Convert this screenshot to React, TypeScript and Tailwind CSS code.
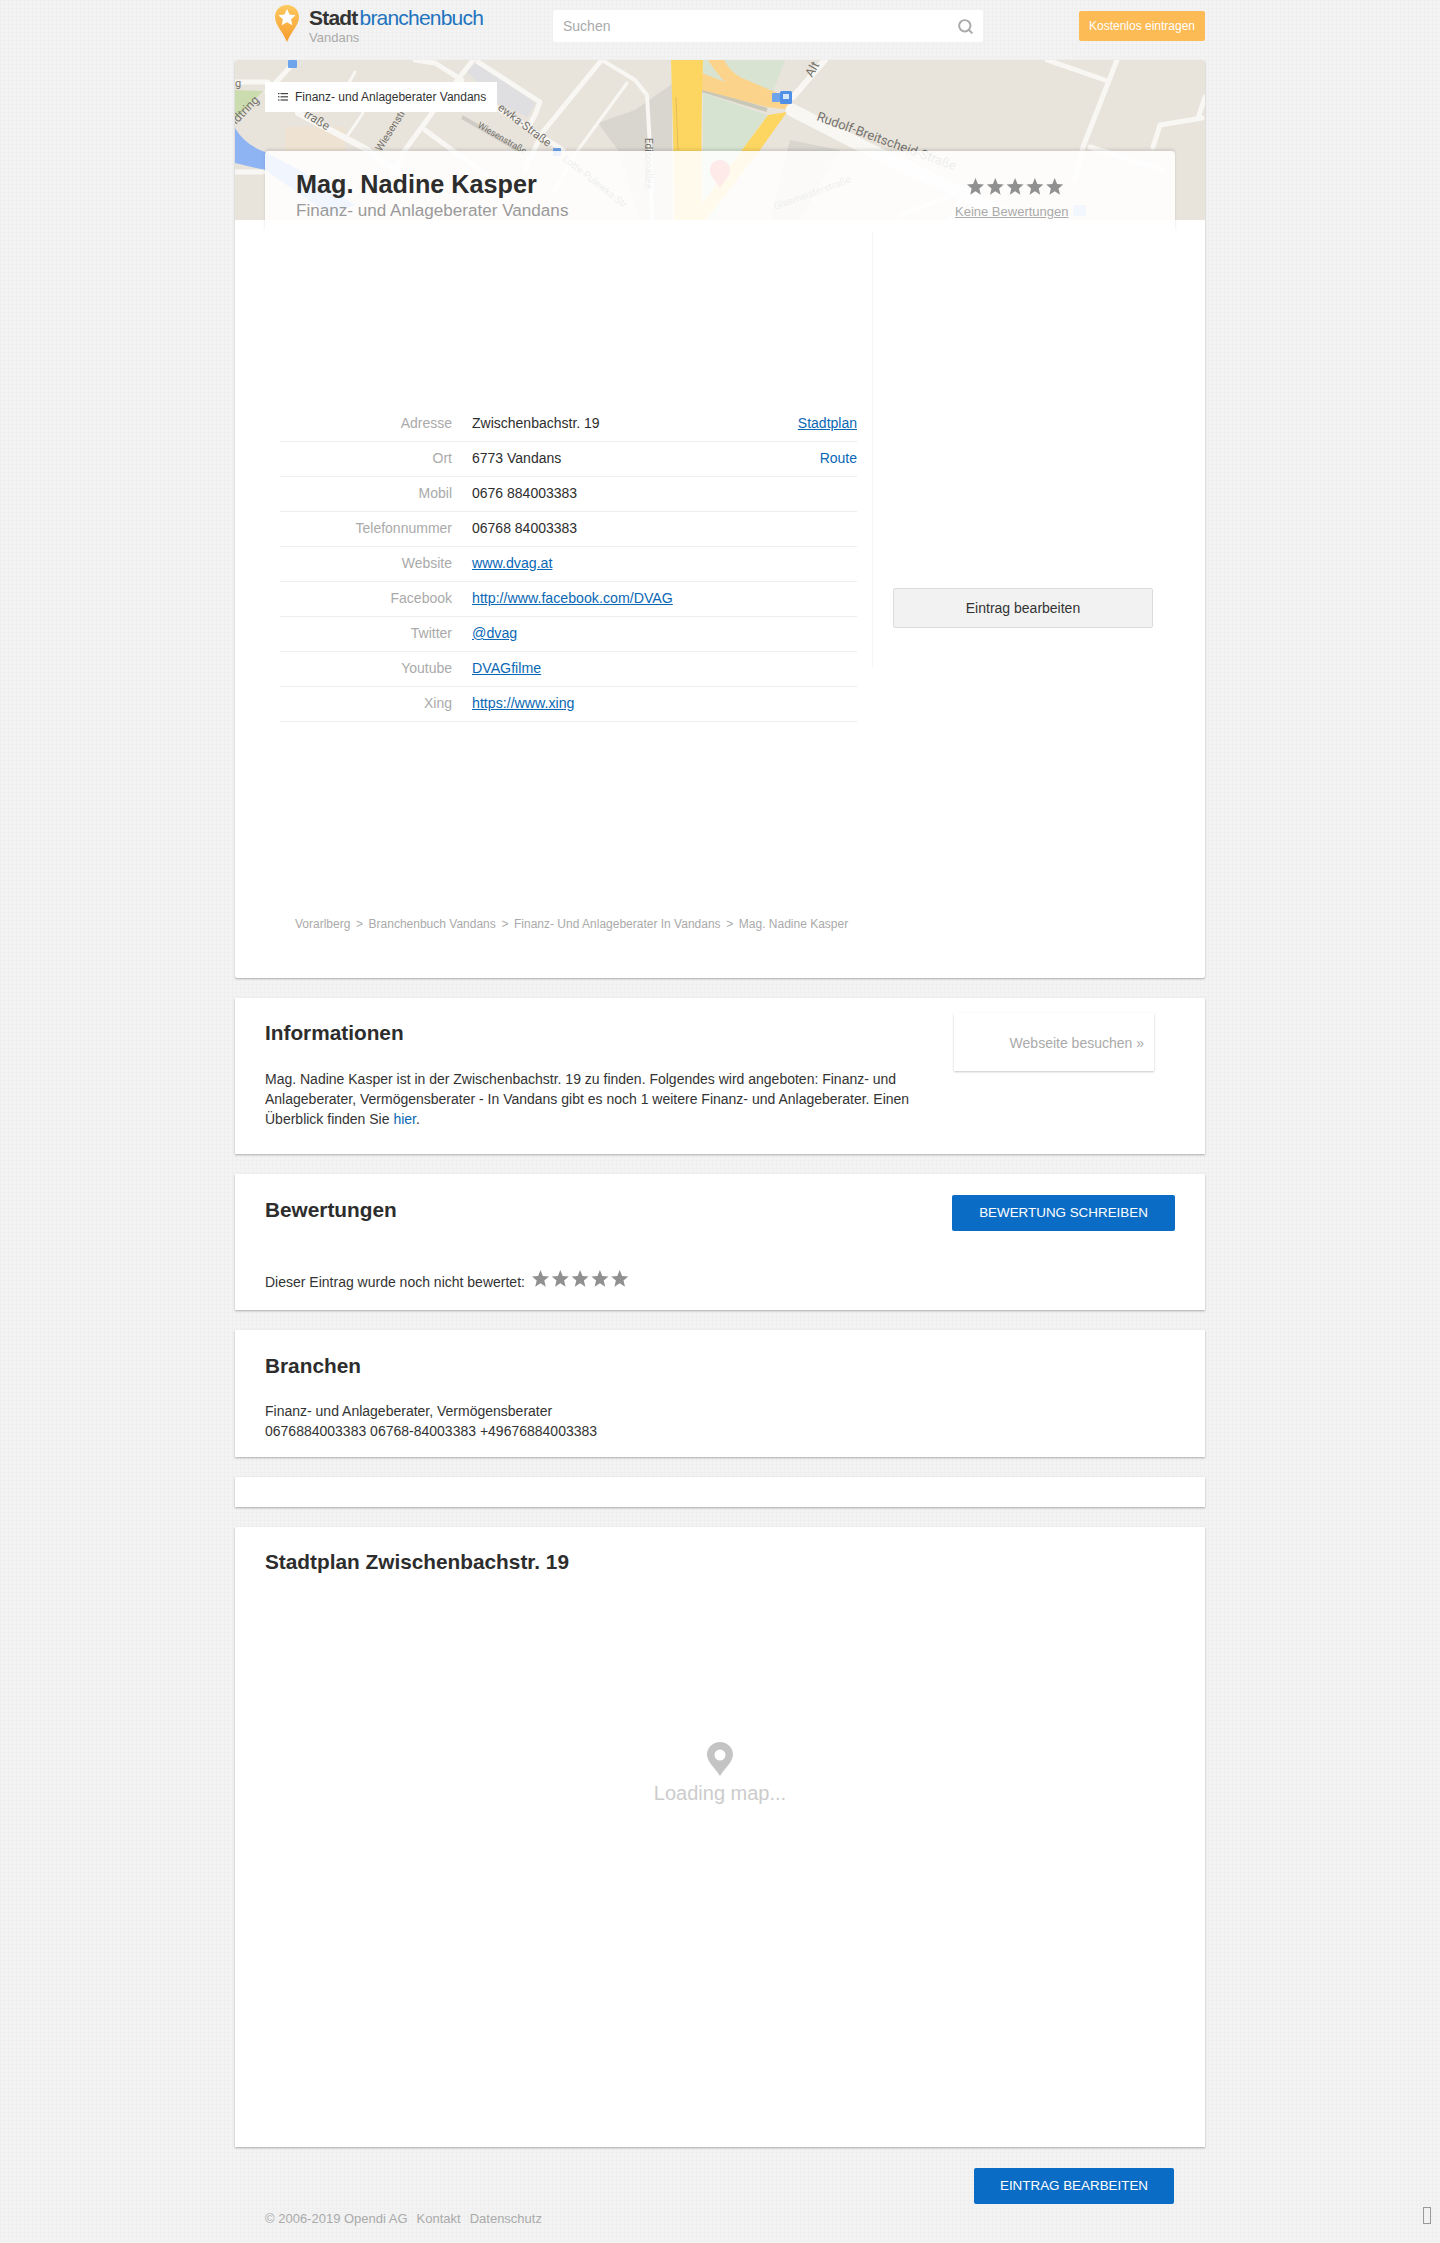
import { Search } from 'lucide-react'

const rows = [
  { label: 'Adresse', value: 'Zwischenbachstr. 19', right: 'Stadtplan', rightUnderline: true },
  { label: 'Ort', value: '6773 Vandans', right: 'Route' },
  { label: 'Mobil', value: '0676 884003383' },
  { label: 'Telefonnummer', value: '06768 84003383' },
  { label: 'Website', value: 'www.dvag.at', link: true },
  { label: 'Facebook', value: 'http://www.facebook.com/DVAG', link: true },
  { label: 'Twitter', value: '@dvag', link: true },
  { label: 'Youtube', value: 'DVAGfilme', link: true },
  { label: 'Xing', value: 'https://www.xing', link: true },
]

function Stars({ className }: { className?: string }) {
  return (
    <svg viewBox="0 0 97 18" className={className} fill="#909090">
      {[0, 1, 2, 3, 4].map((i) => (
        <polygon
          key={i}
          transform={`translate(${i * 19.8} 0)`}
          points="8.5,0 10.9,5.9 17,6.4 12.3,10.4 13.8,16.7 8.5,13.3 3.2,16.7 4.7,10.4 0,6.4 6.1,5.9"
        />
      ))}
    </svg>
  )
}

function MapBackground() {
  const road = { fill: 'none', stroke: '#f8f7f3', strokeLinecap: 'round' as const, strokeLinejoin: 'round' as const }
  const label = { fontFamily: 'Roboto, sans-serif', fill: '#75726c' }
  return (
    <svg viewBox="235 60 970 160" className="absolute inset-0 w-full h-full" preserveAspectRatio="none">
      <rect x="235" y="60" width="970" height="160" fill="#e8e4dc" />
      {/* areas */}
      <path d="M285 127 L345 127 L345 165 L285 165 Z" fill="#eee2d2" />
      <path d="M465 70 L478 63 L535 103 L528 117 L498 103 Z" fill="#dfdfe2" />
      <path d="M598 123 L635 110 L672 84 L672 220 L640 220 L618 150 Z" fill="#d9d5cf" />
      <path d="M840 150 L800 220 L770 220 L790 140 Z" fill="#d9d5cf" />
      <path d="M235 90 L263 91 L250 105 L235 120 Z" fill="#cbdcae" />
      <path d="M235 128 Q245 145 265 152 L300 170 L355 205 L330 215 L265 170 L235 163 Z" fill="#8fb4f4" />
      <path d="M703 60 L785 60 L773 92 L703 92 Z" fill="#d8e3d2" />
      <path d="M703 93 L767 115 L742 150 L715 220 L703 220 Z" fill="#d6e3d0" />
      <path d="M702 90 L767 110" stroke="#c9c8b8" strokeWidth="4" fill="none" />
      {/* highways */}
      <path d="M702 73 L725 82 Q714 70 708 60 L724 60 Q730 72 742 78 L775 92 L792 98 L790 110 L767 107 L702 90 Z" fill="#fbd38a" />
      <path d="M671 60 L703 60 Q700 140 703 220 L674 220 Q674 140 671 60 Z" fill="#fdd661" />
      <path d="M768 115 L787 112 L760 150 L706 220 L690 220 L742 150 Z" fill="#fdd661" />
      <path d="M676 97 L678 150" stroke="#e5bd58" strokeWidth="1" fill="none" />
      {/* streets */}
      <path d="M792 110 L870 150 L1010 216" {...road} strokeWidth="13" />
      <path d="M793 97 L825 60" {...road} strokeWidth="6" />
      <path d="M1047 60 L1105 80" {...road} strokeWidth="5" />
      <path d="M1117 60 L1083 147 L1075 180" {...road} strokeWidth="5" />
      <path d="M1153 147 L1160 125 L1202 118 M1205 97 L1198 118" {...road} strokeWidth="5" />
      <path d="M1090 147 L1163 170" {...road} strokeWidth="5" />
      <path d="M235 82 L268 82 M267 92 L292 65" {...road} strokeWidth="5" />
      <path d="M355 72 L342 95 M363 113 L348 135" {...road} strokeWidth="3" />
      <path d="M415 60 L435 63 L462 80 M497 108 L563 150" {...road} strokeWidth="5" />
      <path d="M478 62 L540 102 L535 115 L528 128" {...road} strokeWidth="5" />
      <path d="M600 62 L542 133 L525 170" {...road} strokeWidth="5" />
      <path d="M602 60 L635 80 L647 95 L650 147 L652 220" {...road} strokeWidth="4" />
      <path d="M627 83 L578 150 L555 190" {...road} strokeWidth="3" />
      <path d="M473 60 L432 113 L405 150 L380 200" {...road} strokeWidth="5" />
      <path d="M298 113 L368 150 L420 190" {...road} strokeWidth="6" />
      <path d="M425 130 L452 150 L500 185" {...road} strokeWidth="5" />
      <path d="M462 117 L518 150" fill="none" stroke="#cfccc6" strokeWidth="4" />
      <path d="M235 172 L263 172" {...road} strokeWidth="5" />
      <path d="M900 215 L965 190 L950 220" {...road} strokeWidth="4" />
      {/* labels */}
      <text x="235" y="87" fontSize="11" {...label}>g</text>
      <text transform="translate(236 125) rotate(-46)" fontSize="12" {...label}>idtring</text>
      <text transform="translate(303 116) rotate(32)" fontSize="12" {...label}>traße</text>
      <text transform="translate(381 152) rotate(-58)" fontSize="10.5" {...label}>Wiesenstraße</text>
      <text transform="translate(477 127) rotate(30)" fontSize="9" {...label}>Wiesenstraße</text>
      <text transform="translate(497 109) rotate(37)" fontSize="11.5" {...label}>ewka-Straße</text>
      <text transform="translate(645 138) rotate(90)" fontSize="10" {...label}>Edisonallee</text>
      <text transform="translate(816 120) rotate(20)" fontSize="13" {...label}>Rudolf-Breitscheid-Straße</text>
      <text transform="translate(812 78) rotate(-60)" fontSize="12.5" {...label}>Alt T</text>
      <text transform="translate(775 210) rotate(-20)" fontSize="10" {...label}>Glasmeisterstraße</text>
      <text transform="translate(562 160) rotate(38)" fontSize="10" {...label}>Lotte-Pulewka-Str</text>
      {/* transit */}
      <rect x="288" y="60" width="9" height="8" rx="1" fill="#6ea4ec" />
      <rect x="772" y="93" width="8" height="9" rx="1" fill="#6ea4ec" />
      <rect x="780" y="91" width="12" height="13" rx="1.5" fill="#4f90e6" />
      <rect x="783" y="94" width="6" height="5" fill="#d7e6fa" />
      <rect x="553" y="148" width="8" height="8" rx="1" fill="#6ea4ec" />
      <rect x="1073" y="205" width="13" height="11" rx="2" fill="#8fb8ee" />
      <path d="M720 160 C713 160 710 166 710 170 C710 177 717 182 720 188 C723 182 730 177 730 170 C730 165 726 160 720 160 Z" fill="#e8554b" />
    </svg>
  )
}

function Heading({ children }: { children: React.ReactNode }) {
  return <h2 className="text-[20.8px] leading-[24px] font-bold text-[#2d2d2d]">{children}</h2>
}

export default function App() {
  return (
    <div className="relative h-[2243px] overflow-hidden bg-[#f3f3f3] bg-[linear-gradient(rgba(0,0,0,0.012)_1px,transparent_1px),linear-gradient(90deg,rgba(0,0,0,0.012)_1px,transparent_1px)] bg-[size:4px_4px] font-['Liberation_Sans',Arial,sans-serif] text-[14px] text-[#2d2d2d]">
      <div className="w-[970px] mx-auto">
        {/* top bar */}
        <header className="h-[60px] flex items-start">
          <div className="flex ml-[40px] pt-[5px] w-[278px]">
            <svg viewBox="0 0 24 37" className="w-[24px] h-[37px]">
              <defs>
                <linearGradient id="pin" x1="0" y1="0" x2="0" y2="1">
                  <stop offset="0" stopColor="#fdc95e" />
                  <stop offset="1" stopColor="#f79b2e" />
                </linearGradient>
              </defs>
              <path d="M12 0 C5 0 0 5 0 12 C0 20 8 27 12 37 C16 27 24 20 24 12 C24 5 19 0 12 0 Z" fill="url(#pin)" />
              <polygon points="12,4 14.6,9.6 20.5,10.3 16.1,14.3 17.3,20.2 12,17.2 6.7,20.2 7.9,14.3 3.5,10.3 9.4,9.6" fill="#fff" />
            </svg>
            <div className="ml-[10px]">
              <div className="text-[21px] leading-[26px] tracking-[-0.8px]">
                <span className="font-bold text-[#333] mr-[2px]">Stadt</span>
                <span className="text-[#1e73be]">branchenbuch</span>
              </div>
              <div className="text-[13px] leading-[15px] mt-[-1px] text-[#aaa]">Vandans</div>
            </div>
          </div>
          <div className="mt-[10px] w-[430px] h-[32px] bg-white rounded-[2px] flex items-center justify-between pl-[10px] pr-[9px]">
            <span className="text-[#aaa]">Suchen</span>
            <Search size={17} strokeWidth={2.8} className="text-[#aaa]" />
          </div>
          <a className="mt-[11px] ml-auto w-[126px] h-[30px] bg-[#fcbb55] rounded-[2px] text-white text-[12px] flex items-center justify-center">
            Kostenlos eintragen
          </a>
        </header>

        <main className="flex flex-col gap-[20px]">
          {/* main entry */}
          <section className="relative h-[918px] bg-white rounded-[2px] shadow-[0_1px_2px_rgba(0,0,0,0.3)]">
            <div className="relative h-[160px] overflow-hidden rounded-t-[3px]">
              <MapBackground />
              <div className="absolute left-[30px] top-[22px] w-[232px] h-[30px] bg-white flex items-center pl-[13px] text-[12px] text-[#333]">
                <svg viewBox="0 0 10 8" className="w-[10px] h-[8px] mr-[7px]" fill="#444">
                  <rect x="0" y="0" width="1.5" height="1.2" />
                  <rect x="2.5" y="0" width="7.5" height="1.2" />
                  <rect x="0" y="3.2" width="1.5" height="1.2" />
                  <rect x="2.5" y="3.2" width="7.5" height="1.2" />
                  <rect x="0" y="6.4" width="1.5" height="1.2" />
                  <rect x="2.5" y="6.4" width="7.5" height="1.2" />
                </svg>
                Finanz- und Anlageberater Vandans
              </div>
            </div>

            {/* title card lies over the map */}
            <div className="absolute left-[30px] right-[30px] top-[91px] h-[81px] bg-white/[.88] rounded-t-[4px] shadow-[0_-2px_3px_rgba(0,0,0,0.1),0_0_1px_rgba(0,0,0,0.03)] flex justify-between">
              <div className="pl-[31px] pt-[18px]">
                <h1 className="text-[25.2px] leading-[30px] font-bold text-[#2d2d2d]">Mag. Nadine Kasper</h1>
                <p className="text-[17.1px] leading-[20px] mt-[2px] text-[#999]">Finanz- und Anlageberater Vandans</p>
              </div>
              <div className="w-[220px] pt-[27px] flex flex-col">
                <Stars className="w-[97px] h-[18px] ml-[12px]" />
                <a className="text-[13px] leading-[15px] mt-[8px] underline text-[#aaa]">Keine Bewertungen</a>
              </div>
            </div>

            <div className="flex">
              <div className="w-[638px] h-[447px] border-r border-[#f5f5f5] pt-[186px] pl-[45px]">
                <table className="w-[577px] table-fixed border-collapse">
                  <tbody>
                    {rows.map((row) => (
                      <tr key={row.label} className="h-[35px] border-b border-[#eeeeee]">
                        <td className="w-[192px] pr-[20px] text-right text-[#aaa]">{row.label}</td>
                        <td className="w-[285px]">
                          {row.link ? (
                            <a className="text-[14.2px] text-[#0a67b5] underline">{row.value}</a>
                          ) : (
                            row.value
                          )}
                        </td>
                        <td className="text-right">
                          {row.right && (
                            <a className={row.rightUnderline ? 'text-[#0a67b5] underline' : 'text-[#0a67b5]'}>
                              {row.right}
                            </a>
                          )}
                        </td>
                      </tr>
                    ))}
                  </tbody>
                </table>
              </div>
              <div className="pl-[20px] pt-[368px]">
                <a className="w-[260px] h-[40px] bg-[#f2f2f2] border border-[#dcdcdc] rounded-[2px] flex items-center justify-center text-[#333]">
                  Eintrag bearbeiten
                </a>
              </div>
            </div>

            <nav className="absolute left-[60px] top-[857px] text-[12px] leading-[14px] text-[#aaa] flex gap-[5.6px]">
              <span>Vorarlberg</span>
              <span>&gt;</span>
              <span>Branchenbuch Vandans</span>
              <span>&gt;</span>
              <span>Finanz- Und Anlageberater In Vandans</span>
              <span>&gt;</span>
              <span>Mag. Nadine Kasper</span>
            </nav>
          </section>

          {/* Informationen */}
          <section className="h-[156px] bg-white shadow-[0_1px_2px_rgba(0,0,0,0.3)] flex pl-[30px]">
            <div className="w-[660px] pt-[23px]">
              <Heading>Informationen</Heading>
              <p className="mt-[24px] leading-[20px] text-[#333]">
                Mag. Nadine Kasper ist in der Zwischenbachstr. 19 zu finden. Folgendes wird angeboten: Finanz- und
                Anlageberater, Vermögensberater - In Vandans gibt es noch 1 weitere Finanz- und Anlageberater. Einen
                Überblick finden Sie <a className="text-[#0a67b5]">hier</a>.
              </p>
            </div>
            <div className="ml-[29px] mt-[15px] w-[200px] h-[58px] bg-white shadow-[0_1px_2px_rgba(0,0,0,0.22)] flex items-center justify-end pr-[10px] pt-[2px] text-[#aaa]">
              Webseite besuchen »
            </div>
          </section>

          {/* Bewertungen */}
          <section className="h-[136px] bg-white shadow-[0_1px_2px_rgba(0,0,0,0.3)] px-[30px] pt-[21px]">
            <div className="flex justify-between items-start">
              <div className="pt-[3px]">
                <Heading>Bewertungen</Heading>
              </div>
              <a className="w-[223px] h-[36px] bg-[#0a6cc5] rounded-[2px] text-white text-[13.4px] flex items-center justify-center">
                BEWERTUNG SCHREIBEN
              </a>
            </div>
            <div className="mt-[40px] flex items-start">
              <span className="leading-[20px] mt-[1px] text-[#333]">Dieser Eintrag wurde noch nicht bewertet:</span>
              <Stars className="w-[97px] h-[18px] ml-[7px] mt-[-1px]" />
            </div>
          </section>

          {/* Branchen */}
          <section className="h-[127px] bg-white shadow-[0_1px_2px_rgba(0,0,0,0.3)] px-[30px] pt-[24px]">
            <Heading>Branchen</Heading>
            <p className="mt-[23px] leading-[20px] text-[#333]">
              Finanz- und Anlageberater, Vermögensberater
              <br />
              0676884003383 06768-84003383 +49676884003383
            </p>
          </section>

          <section className="h-[30px] bg-white shadow-[0_1px_2px_rgba(0,0,0,0.3)]" />

          {/* Stadtplan */}
          <section className="h-[620px] bg-white shadow-[0_1px_2px_rgba(0,0,0,0.3)] px-[30px] pt-[23px]">
            <Heading>Stadtplan Zwischenbachstr. 19</Heading>
            <div className="flex flex-col items-center pt-[168px]">
              <svg viewBox="0 0 26 34" className="w-[26px] h-[34px]">
                <path
                  fillRule="evenodd"
                  d="M13 0 C5.8 0 0 5.6 0 12.6 C0 20 8 26 13 34 C18 26 26 20 26 12.6 C26 5.6 20.2 0 13 0 Z M13 7.5 A5.5 5.5 0 1 1 13 18.5 A5.5 5.5 0 1 1 13 7.5 Z"
                  fill="#c4c4c4"
                />
              </svg>
              <p className="text-[20px] leading-[24px] mt-[5px] text-[#cccccc]">Loading map...</p>
            </div>
          </section>
        </main>

        <div className="flex justify-end pr-[31px] mt-[21px]">
          <a className="w-[200px] h-[36px] bg-[#0a6cc5] rounded-[2px] text-white text-[13.4px] flex items-center justify-center">
            EINTRAG BEARBEITEN
          </a>
        </div>
        <footer className="pl-[30px] mt-[7px] text-[13px] leading-[16px] text-[#aaa] flex gap-[9px]">
          <span>© 2006-2019 Opendi AG</span>
          <span>Kontakt</span>
          <span>Datenschutz</span>
        </footer>
      </div>
      <span className="absolute left-[1423px] top-[2207px] w-[8px] h-[17px] border border-[#999]" />
    </div>
  )
}
